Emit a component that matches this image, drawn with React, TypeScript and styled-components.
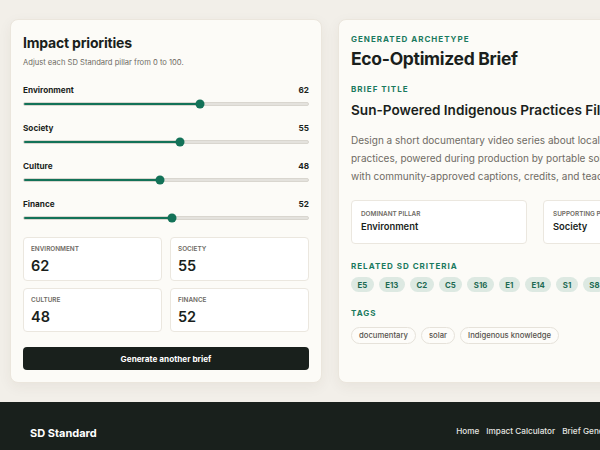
import React from "react";
import styled, { createGlobalStyle } from "styled-components";

const Global = createGlobalStyle`
  html, body { margin: 0; padding: 0; overflow: hidden; background: #f2efe9; }
  body { font-family: Inter, "Open Sans", sans-serif; color: #1a1f1c; }
  * { box-sizing: border-box; }
`;

const Page = styled.div`
  width: 740px;
  display: flex;
  flex-direction: column;
  background: #f2efe9;
`;

const Main = styled.main`
  display: grid;
  grid-template-columns: 312px 392px;
  gap: 16px;
  padding: 19px 10px 19px 10px;
  align-items: stretch;
`;

const Card = styled.section`
  background: #fcfbf7;
  border: 1px solid #ebe6dd;
  border-radius: 8px;
  box-shadow: 0 4px 14px rgba(60, 50, 30, 0.06);
  padding: 14px 12px 12px 12px;
  height: 364px;
  display: flex;
  flex-direction: column;
`;

const Title = styled.h2`
  margin: 0;
  font-size: 14px;
  font-weight: 700;
  letter-spacing: -0.2px;
  line-height: 18px;
`;

const Sub = styled.p`
  margin: 5px 0 0;
  font-size: 7.6px;
  color: #6f6b64;
  line-height: 11px;
`;

const Sliders = styled.div`
  margin-top: 17px;
  display: flex;
  flex-direction: column;
  gap: 17px;
`;

const SliderRow = styled.div`
  display: flex;
  flex-direction: column;
  gap: 6px;
`;

const SliderHead = styled.div`
  display: flex;
  justify-content: space-between;
  font-size: 8.2px;
  font-weight: 700;
  line-height: 11px;
`;

const Track = styled.div`
  position: relative;
  height: 4px;
  border-radius: 2px;
  background: #e4e2dd;
  border: 0.5px solid #d9d6cf;
`;

const Fill = styled.div`
  height: 100%;
  border-radius: 2px;
  background: #137258;
`;

const Thumb = styled.div`
  position: absolute;
  top: 50%;
  width: 9px;
  height: 9px;
  border-radius: 50%;
  background: #137258;
  transform: translate(-50%, -50%);
`;

const StatGrid = styled.div`
  margin-top: 17px;
  display: grid;
  grid-template-columns: 1fr 1fr;
  gap: 7px 8px;
`;

const Box = styled.div<{ $pillar?: boolean }>`
  background: #ffffff;
  border: 1px solid #ebe7df;
  border-radius: 4px;
  padding: ${(p) => (p.$pillar ? "9px 9px" : "7px 7px")};
  height: 44px;
  display: flex;
  flex-direction: column;
  gap: ${(p) => (p.$pillar ? "1px" : "3px")};
`;

const BoxLabel = styled.div`
  font-size: 6.4px;
  font-weight: 600;
  color: #6e6a63;
  text-transform: uppercase;
  line-height: 9px;
`;

const BoxValue = styled.div<{ $big?: boolean }>`
  font-size: ${(p) => (p.$big ? "14.5px" : "9.4px")};
  font-weight: 600;
  line-height: ${(p) => (p.$big ? "18px" : "14px")};
  color: #1a1f1c;
`;

const Button = styled.button`
  margin-top: 15px;
  height: 25px;
  width: 100%;
  border: none;
  border-radius: 4px;
  background: #19201c;
  color: #fff;
  font-family: inherit;
  font-size: 8.2px;
  font-weight: 700;
`;

const Eyebrow = styled.div<{ $mt?: number }>`
  margin-top: ${(p) => p.$mt ?? 0}px;
  font-size: 8px;
  font-weight: 700;
  color: #1a7a5e;
  letter-spacing: 1px;
  text-transform: uppercase;
  line-height: 10px;
`;

const BigTitle = styled.h1`
  margin: 4px 0 0;
  font-size: 17.5px;
  font-weight: 700;
  letter-spacing: -0.3px;
  line-height: 22px;
`;

const BriefTitle = styled.h3`
  margin: 7px 0 0;
  font-size: 13.6px;
  font-weight: 600;
  line-height: 18px;
  white-space: nowrap;
`;

const Para = styled.p`
  margin: 12px 0 0;
  font-size: 10px;
  color: #6f6b64;
  line-height: 18px;
  white-space: nowrap;
`;

const PillarGrid = styled.div`
  margin-top: 15px;
  display: grid;
  grid-template-columns: 176px 176px;
  gap: 16px;
`;

const Chips = styled.div<{ $mt?: number }>`
  margin-top: ${(p) => p.$mt ?? 6}px;
  display: flex;
  gap: 5px;
  flex-wrap: nowrap;
`;

const Chip = styled.span`
  display: inline-flex;
  align-items: center;
  justify-content: center;
  height: 15px;
  padding: 0 6.5px;
  border-radius: 8px;
  background: #dde9e2;
  color: #1d6a52;
  font-size: 7.8px;
  font-weight: 700;
`;

const Tag = styled.span`
  display: inline-flex;
  align-items: center;
  height: 17px;
  padding: 0 7px;
  border-radius: 9px;
  background: #fdfcf9;
  border: 1px solid #e6e2da;
  color: #57534d;
  font-size: 7.7px;
  font-weight: 500;
`;

const Footer = styled.footer`
  background: #19201c;
  height: 60px;
  padding: 0 39px 0 30px;
  display: flex;
  align-items: center;
  justify-content: space-between;
`;

const Brand = styled.div`
  color: #fff;
  font-size: 11px;
  font-weight: 700;
  margin-top: 2px;
`;

const Nav = styled.nav`
  display: flex;
  gap: 7px;
  margin-top: -3px;
`;

const NavLink = styled.a`
  color: #e4e4e0;
  font-size: 8.2px;
  font-weight: 500;
  text-decoration: none;
`;

const pillars = [
  { name: "Environment", value: 62 },
  { name: "Society", value: 55 },
  { name: "Culture", value: 48 },
  { name: "Finance", value: 52 },
];

const criteria = ["E5", "E13", "C2", "C5", "S16", "E1", "E14", "S1", "S8", "C9"];
const tags = ["documentary", "solar", "Indigenous knowledge"];

const paraLines = [
  "Design a short documentary video series about local Indigenous",
  "practices, powered during production by portable solar kits,",
  "with community-approved captions, credits, and teaching notes.",
];

export default function App() {
  return (
    <Page>
      <Global />
      <Main>
        <Card>
          <Title>Impact priorities</Title>
          <Sub>Adjust each SD Standard pillar from 0 to 100.</Sub>
          <Sliders>
            {pillars.map((p) => (
              <SliderRow key={p.name}>
                <SliderHead>
                  <span>{p.name}</span>
                  <span>{p.value}</span>
                </SliderHead>
                <Track>
                  <Fill style={{ width: `${p.value}%` }} />
                  <Thumb style={{ left: `${p.value}%` }} />
                </Track>
              </SliderRow>
            ))}
          </Sliders>
          <StatGrid>
            {pillars.map((p) => (
              <Box key={p.name}>
                <BoxLabel>{p.name}</BoxLabel>
                <BoxValue $big>{p.value}</BoxValue>
              </Box>
            ))}
          </StatGrid>
          <Button>Generate another brief</Button>
        </Card>
        <Card>
          <Eyebrow>Generated archetype</Eyebrow>
          <BigTitle>Eco-Optimized Brief</BigTitle>
          <Eyebrow $mt={14}>Brief title</Eyebrow>
          <BriefTitle>Sun-Powered Indigenous Practices Film Series</BriefTitle>
          <Para>
            {paraLines.map((l, i) => (
              <React.Fragment key={i}>
                {l}
                {i < paraLines.length - 1 && <br />}
              </React.Fragment>
            ))}
          </Para>
          <PillarGrid>
            <Box $pillar>
              <BoxLabel>Dominant pillar</BoxLabel>
              <BoxValue>Environment</BoxValue>
            </Box>
            <Box $pillar>
              <BoxLabel>Supporting pillar</BoxLabel>
              <BoxValue>Society</BoxValue>
            </Box>
          </PillarGrid>
          <Eyebrow $mt={17}>Related SD criteria</Eyebrow>
          <Chips $mt={6}>
            {criteria.map((c) => (
              <Chip key={c}>{c}</Chip>
            ))}
          </Chips>
          <Eyebrow $mt={16}>Tags</Eyebrow>
          <Chips $mt={9}>
            {tags.map((t) => (
              <Tag key={t}>{t}</Tag>
            ))}
          </Chips>
        </Card>
      </Main>
      <Footer>
        <Brand>SD Standard</Brand>
        <Nav>
          <NavLink>Home</NavLink>
          <NavLink>Impact Calculator</NavLink>
          <NavLink>Brief Generator</NavLink>
          <NavLink>Resources</NavLink>
          <NavLink>About</NavLink>
        </Nav>
      </Footer>
    </Page>
  );
}
